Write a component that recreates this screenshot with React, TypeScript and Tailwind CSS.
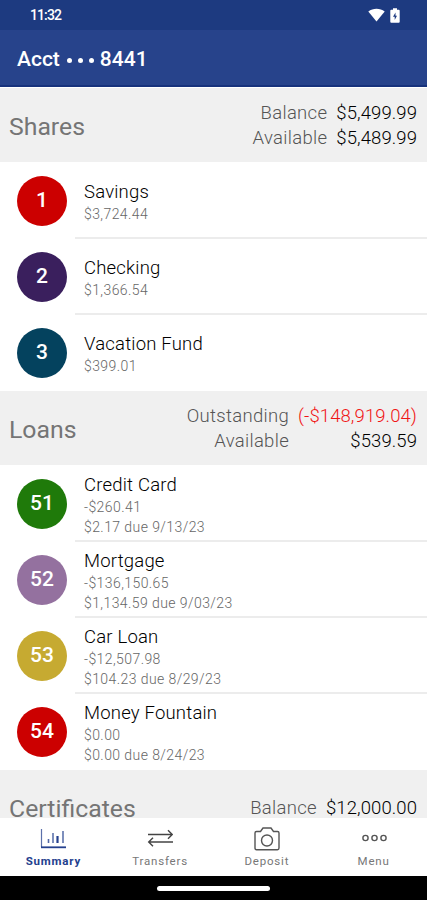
import React from 'react';

type Total = { label: string; value: string; negative?: boolean };
type Account = { id: string; color: string; name: string; lines: string[] };

const shares: Account[] = [
  { id: '1', color: 'bg-[#cc0000]', name: 'Savings', lines: ['$3,724.44'] },
  { id: '2', color: 'bg-[#3a1f5d]', name: 'Checking', lines: ['$1,366.54'] },
  { id: '3', color: 'bg-[#04425e]', name: 'Vacation Fund', lines: ['$399.01'] },
];

const loans: Account[] = [
  { id: '51', color: 'bg-[#1f7a0a]', name: 'Credit Card', lines: ['-$260.41', '$2.17 due 9/13/23'] },
  { id: '52', color: 'bg-[#94719f]', name: 'Mortgage', lines: ['-$136,150.65', '$1,134.59 due 9/03/23'] },
  { id: '53', color: 'bg-[#c6aa31]', name: 'Car Loan', lines: ['-$12,507.98', '$104.23 due 8/29/23'] },
  { id: '54', color: 'bg-[#cc0000]', name: 'Money Fountain', lines: ['$0.00', '$0.00 due 8/24/23'] },
];

function SectionHeader({ title, totals }: { title: string; totals: Total[] }) {
  return (
    <div className="flex h-[74px] shrink-0 items-center justify-between bg-[#f0f0f0] pr-[10px] pl-[9px]">
      <h2 className="pt-[2px] text-[24.8px] leading-[19px] text-[#757575]">{title}</h2>
      <div className="grid grid-cols-[auto_auto] gap-x-[9px] pt-[2px] text-right text-[18.5px] leading-[25px] font-light">
        {totals.map((t) => (
          <React.Fragment key={t.label}>
            <span className="tracking-[0.3px] text-[#555555]">{t.label}</span>
            <span className={`tracking-[0.1px] ${t.negative ? 'text-[#f01515]' : 'text-black'}`}>{t.value}</span>
          </React.Fragment>
        ))}
      </div>
    </div>
  );
}

function AccountRow({ account, last }: { account: Account; last: boolean }) {
  return (
    <div className="flex h-[76px] shrink-0 items-center pl-[17px]">
      <div className={`mt-[1px] flex size-[50px] shrink-0 items-center justify-center rounded-full pt-[1px] text-[21px] font-medium text-white ${account.color}`}>
        {account.id}
      </div>
      <div className="ml-2 flex h-[76px] flex-1 flex-col">
        <div className="flex flex-1 flex-col justify-center pt-[5px] pl-[9px]">
          <div className="text-[18.5px] leading-[24px] font-light tracking-[0.2px] text-black">{account.name}</div>
          {account.lines.map((line) => (
            <div key={line} className="text-[14px] leading-[20px] font-light tracking-[0.42px] text-[#666666]">{line}</div>
          ))}
        </div>
        <div className={`-mb-[1px] h-[2px] shrink-0 ${last ? 'bg-transparent' : 'bg-[#ececec]'}`} />
      </div>
    </div>
  );
}

function Section({ title, totals, accounts }: { title: string; totals: Total[]; accounts: Account[] }) {
  return (
    <section className="shrink-0 pb-px">
      <SectionHeader title={title} totals={totals} />
      {accounts.map((a, i) => <AccountRow key={a.id} account={a} last={i === accounts.length - 1} />)}
    </section>
  );
}

function Tab({ label, active, children }: { label: string; active?: boolean; children: React.ReactNode }) {
  return (
    <div className={`flex flex-1 flex-col items-center pt-[8px] ${active ? 'font-bold text-[#24408e]' : 'text-[#777777]'}`}>
      <div className="flex h-[25px] items-center">{children}</div>
      <span className="mt-[1px] text-[11.5px] leading-[18px] tracking-[0.8px]">{label}</span>
    </div>
  );
}

export default function App() {
  return (
    <div className="flex h-[900px] w-[427px] flex-col overflow-hidden bg-white font-['Roboto',sans-serif]">
      <div className="flex h-[30px] shrink-0 items-center justify-between bg-[#1d3a80] pr-[27px] pl-[30px] text-white">
        <span className="pt-[1px] text-[14px] font-medium tracking-[-0.9px]">11:32</span>
        <div className="flex items-center gap-[5px]">
          <svg width="17" height="14" viewBox="0 0 17 14" fill="currentColor">
            <path d="M0.3 3.5C5-0.2 12-0.2 16.7 3.5L8.5 13.6Z" />
          </svg>
          <svg width="10" height="15" viewBox="0 0 10 15">
            <path d="M3 0.3H7V1.8H8.8Q9.7 1.8 9.7 2.8V13.7Q9.7 14.7 8.8 14.7H1.2Q.3 14.7.3 13.7V2.8Q.3 1.8 1.2 1.8H3Z" fill="currentColor" />
            <path d="M5.5 4.5L3 8.7H4.7V12L7 7.8H5.5Z" fill="#1d3a80" />
          </svg>
        </div>
      </div>
      <header className="flex h-[57px] shrink-0 items-center border-b-2 border-[#17327c] bg-[#27438b] pt-[5px] pl-[17px] text-[21px] font-medium text-white">
        <span>Acct</span>
        <span className="mr-[6px] ml-[7px] flex gap-[6px]">
          <i className="size-[5px] rounded-full bg-white" />
          <i className="size-[5px] rounded-full bg-white" />
          <i className="size-[5px] rounded-full bg-white" />
        </span>
        <span>8441</span>
      </header>
      <main className="flex min-h-0 flex-1 flex-col overflow-hidden pt-px">
        <Section title="Shares" totals={[{ label: 'Balance', value: '$5,499.99' }, { label: 'Available', value: '$5,489.99' }]} accounts={shares} />
        <Section title="Loans" totals={[{ label: 'Outstanding', value: '(-$148,919.04)', negative: true }, { label: 'Available', value: '$539.59' }]} accounts={loans} />
        <Section title="Certificates" totals={[{ label: 'Balance', value: '$12,000.00' }]} accounts={[]} />
      </main>
      <nav className="flex h-[58px] shrink-0 bg-white">
        <Tab label="Summary" active>
          <svg width="26" height="20" viewBox="0 0 26 20" fill="none" stroke="currentColor">
            <path d="M1.5 0V18.3" strokeWidth="1.2" opacity="0.75" />
            <path d="M1 18.3H26" strokeWidth="1.8" />
            <path d="M8.5 10V14" strokeWidth="1.6" opacity="0.8" />
            <path d="M13 4V14M23 2V14" strokeWidth="1.8" opacity="0.65" />
            <path d="M17.5 7V14" strokeWidth="2.2" />
          </svg>
        </Tab>
        <Tab label="Transfers">
          <svg width="26" height="20" viewBox="0 0 26 20" fill="none" stroke="#444444" strokeWidth="1.4">
            <path d="M1 5.5H25.2M21 1.2L25.3 5.5L21 9.8M26 13H2M6 8.7L1.7 13L6 17.3" />
          </svg>
        </Tab>
        <Tab label="Deposit">
          <svg width="26" height="24" viewBox="0 0 26 24" fill="none" stroke="#555555" strokeWidth="1.4">
            <path d="M2.5 4.5H6.5L9 1H17L19.5 4.5H23.5Q25 4.5 25 6V21Q25 22.7 23.5 22.7H2.5Q1 22.7 1 21V6Q1 4.5 2.5 4.5Z" />
            <circle cx="13" cy="13.5" r="5.5" />
          </svg>
        </Tab>
        <Tab label="Menu">
          <svg width="26" height="12" viewBox="0 0 26 12" fill="none" stroke="#555555" strokeWidth="1.4">
            <circle cx="4.5" cy="5" r="2.6" /><circle cx="13.5" cy="5" r="2.6" /><circle cx="22.5" cy="5" r="2.6" />
          </svg>
        </Tab>
      </nav>
      <footer className="flex h-[24px] shrink-0 items-center justify-center bg-black">
        <div className="h-[5px] w-[113px] rounded-full bg-white" />
      </footer>
    </div>
  );
}
